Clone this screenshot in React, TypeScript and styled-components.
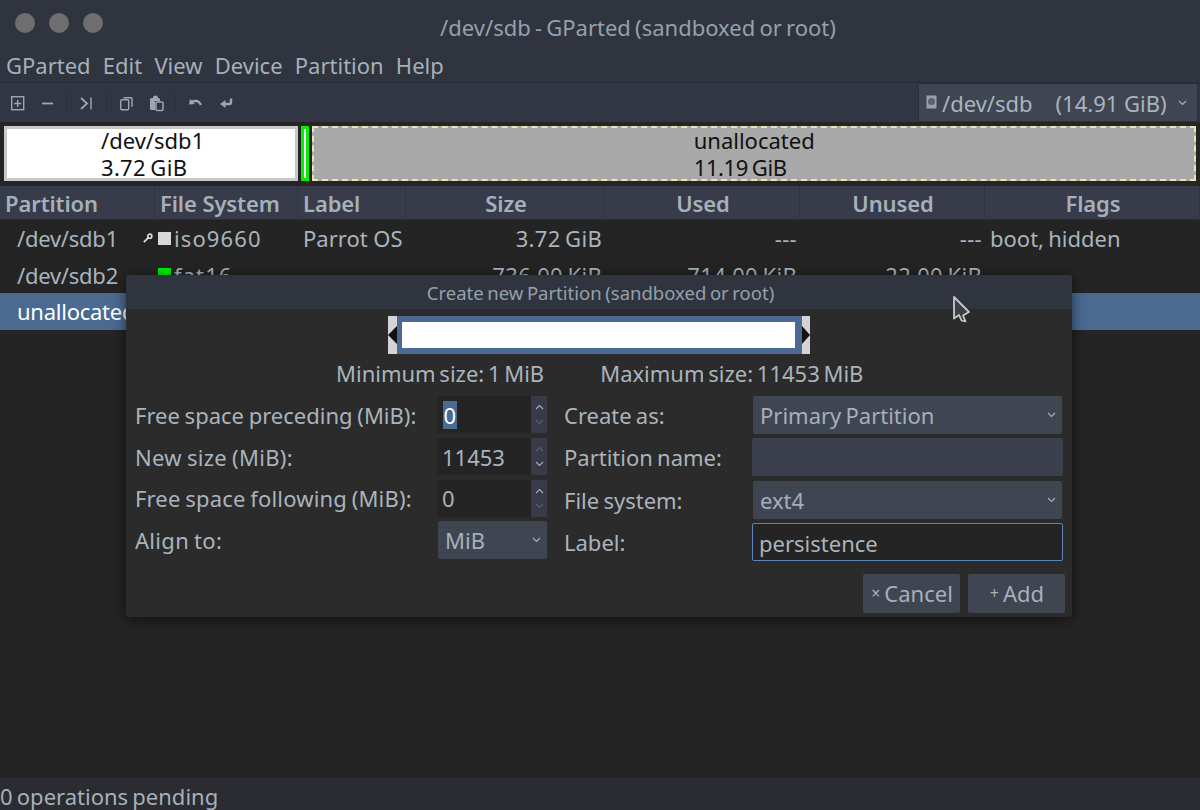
import React from "react";
import styled, { createGlobalStyle } from "styled-components";

const Global = createGlobalStyle`
  html, body { margin: 0; padding: 0; background: #232323; }
  body { font-family: "Noto Sans", "Open Sans", sans-serif; font-size: 22px; color: #a9b4bd; word-spacing: -1.5px; }
  * { box-sizing: border-box; }
`;

const Win = styled.div`
  position: relative; width: 1200px; height: 810px; overflow: hidden;
  display: flex; flex-direction: column; background: #242424;
`;
const TitleBar = styled.div`
  height: 42px; flex: none; background: #2f343f; display: flex; align-items: center; position: relative;
  justify-content: center; color: #96a0ab; padding-left: 76px; padding-top: 11px;
`;
const Lights = styled.div`
  position: absolute; left: 15px; top: 13px; display: flex; gap: 14px;
`;
const Light = styled.span`
  width: 20px; height: 20px; border-radius: 50%; background: #6e6e6e;
`;
const MenuBar = styled.div`
  height: 41px; flex: none; background: #2f343f; display: flex; gap: 12.2px; align-items: center; padding: 6px 0 0 6px;
  color: #a5b0ba; border-bottom: 1px solid #262a33;
`;
const ToolBar = styled.div`
  height: 39px; flex: none; background: #323644; display: flex; align-items: center; padding-left: 9px; position: relative;
`;
const Tool = styled.span<{ $mr: number }>`
  width: 18px; height: 18px; display: flex; margin-right: ${(p) => p.$mr}px; flex: none;
`;
const Sep = styled.span<{ $mr: number }>`
  width: 1px; height: 22px; margin-right: ${(p) => p.$mr}px; flex: none;
  background: repeating-linear-gradient(to bottom, #282b35 0 1px, transparent 1px 2px);
`;
const DeviceCombo = styled.div`
  position: absolute; right: 2px; top: 0; width: 280px; height: 39px; background: #404552; border-radius: 2px;
  display: flex; align-items: center; padding-left: 7px; color: #a9b4bd; white-space: pre; word-spacing: 0;
  border: 1px solid #2b2f39;
`;
const Caret = styled.svg`
  width: 9px; height: 6px; flex: none;
`;
const MapStrip = styled.div`
  height: 64px; flex: none; background: #252525; display: flex; padding: 4px; gap: 3px;
`;
const MapLine = styled.span<{ $ls?: number }>`
  display: block; height: 27px; flex: none; letter-spacing: ${(p) => p.$ls ?? 0}px;
`;
const MapUsed = styled.div`
  width: 294px; height: 55px; background: #fff; border: 3px solid #c8c8c8; color: #111;
  display: flex; flex-direction: column; padding-left: 94px; line-height: 23px;
`;
const MapGreen = styled.div`
  width: 8px; height: 55px; background: #fff; border: 3px solid #00f000; flex: none;
`;
const MapFree = styled.div`
  width: 885px; height: 55px; background: #a9a9a9; border: 2px dashed #e8e6b4; color: #111;
  display: flex; flex-direction: column; line-height: 25px; padding-left: 380px;
`;
const cols = "155px 143px 108px 199px 195px 185px 215px";
const Header = styled.div`
  height: 34px; flex: none; display: grid; grid-template-columns: ${cols}; background: #383c4a;
  border-bottom: 1px solid #2a2d36; font-weight: 600; color: #a5b0ba; word-spacing: 0; letter-spacing: -0.1px;
`;
const HeadCell = styled.div<{ $c?: boolean }>`
  display: flex; align-items: center; padding-left: 5px; padding-right: ${(p) => (p.$c ? "3px" : "0")};
  border-right: 1px solid #2f343f;
  justify-content: ${(p) => (p.$c ? "center" : "flex-start")};
`;
const Row = styled.div<{ $sel?: boolean }>`
  height: 36.5px; flex: none; display: grid; grid-template-columns: ${cols}; align-items: center;
  background: ${(p) => (p.$sel ? "#4a6a92" : "transparent")};
  color: ${(p) => (p.$sel ? "#fff" : "#a9b4bd")};
`;
const NameCell = styled.div`padding-left: 17px; white-space: nowrap; letter-spacing: -0.25px;`;
const FsCell = styled.div`display: flex; align-items: center; white-space: nowrap; padding-left: 3px; letter-spacing: 1.1px;`;
const Swatch = styled.span<{ $c: string }>`
  width: 13px; height: 13px; background: ${(p) => p.$c}; margin: 0 3px 0 0; flex: none;
`;
const KeySlot = styled.span`width: 16px; display: flex; margin-left: -16px; flex: none;`;
const LabelCell = styled.div`padding-left: 5px; white-space: nowrap; word-spacing: 0;`;
const RightCell = styled.div`text-align: right; padding-right: 3px; white-space: nowrap; letter-spacing: 0.3px;`;
const FlagsCell = styled.div`padding-left: 5px; white-space: nowrap;`;
const Body = styled.div`flex: 1; background: #242424;`;
const Status = styled.div`
  height: 32.500px; flex: none; background: #2a2c31; display: flex; align-items: center; color: #a5b0ba; padding-top: 4px;
`;

const Dialog = styled.div`
  position: absolute; left: 126px; top: 275px; width: 946px; height: 342px; background: #2b2b2b;
  border-radius: 3px; box-shadow: 0 2px 14px rgba(0,0,0,.55); display: flex; flex-direction: column;
`;
const DTitle = styled.div`
  height: 34px; background: #2f343f; color: #96a0ab; font-size: 18.5px; word-spacing: -1.2px; display: flex; align-items: center; justify-content: center;
  border-radius: 3px 3px 0 0; padding-left: 3px; flex: none;
`;
const Resizer = styled.div`
  margin: 7px 0 0 262px; width: 422px; height: 38px; display: flex; flex: none;
`;
const Handle = styled.div<{ $w: number }>`
  width: ${(p) => p.$w}px; height: 38px; background: #d4d4d4; flex: none; display: flex; align-items: center;
`;
const Bar = styled.div`
  flex: 1; background: #4a6a92; padding: 6px 7px 6px 5px; display: flex;
`;
const BarFill = styled.div`flex: 1; background: #fff;`;
const SizeLine = styled.div`
  display: flex; height: 30px; margin-top: 4px; padding-left: 210px; gap: 56px; align-items: center; white-space: nowrap; word-spacing: -2px;
`;
const Form = styled.div`
  margin: 6px 0 0 9px; display: flex; gap: 16px; flex: none;
`;
const LeftGrid = styled.div`
  display: grid; grid-template-columns: 302px 110px; grid-auto-rows: 41.7px; align-items: center;
`;
const RightGrid = styled.div`
  display: grid; grid-template-columns: 190px 309px; grid-auto-rows: 42.3px; align-items: center;
`;
const FLabel = styled.div<{ $ls?: number }>`white-space: nowrap; word-spacing: -1px; letter-spacing: ${(p) => p.$ls ?? 0}px;`;
const FLabel2 = styled.div`white-space: nowrap; padding-left: 1px;`;
const Spin = styled.div`
  width: 110px; height: 37px; background: #242424; display: flex; justify-content: space-between; border-radius: 2px;
`;
const SpinText = styled.div`padding-left: 5px; display: flex; align-items: center;`;
const Selected = styled.span`background: #4a6a92; color: #fff; height: 28px; line-height: 28px; padding: 0 .5px; margin-left: 1px;`;
const SpinBtns = styled.div`
  width: 16px; height: 37px; background: #373b47; display: flex; flex-direction: column; align-items: center; justify-content: space-between; padding: 8px 0;
`;
const Combo = styled.div<{ $w: number; $pl: number }>`
  width: ${(p) => p.$w}px; height: 38px; background: #404552; border-radius: 2px; display: flex; align-items: center;
  justify-content: space-between; padding: 0 6px 0 ${(p) => p.$pl}px; color: #a5b0ba; justify-self: end;
`;
const Entry = styled.div<{ $focus?: boolean }>`
  width: 311px; height: 38px; margin-left: -1px; border-radius: 2px; display: flex; align-items: center; padding: 2px 0 0 6px;
  background: ${(p) => (p.$focus ? "#242424" : "#3c404c")};
  border: 1px solid ${(p) => (p.$focus ? "#5c86b8" : "#3c404c")};
`;
const Actions = styled.div`
  display: flex; justify-content: flex-end; gap: 8px; padding-right: 7px; margin-top: 11px; flex: none;
`;
const Btn = styled.div`
  width: 97px; height: 39px; background: #404552; border-radius: 2px; display: flex; align-items: center; justify-content: center;
  gap: 4px; color: #a5b0ba; padding: 0 0 1px 1px;
`;
const BtnGlyph = styled.span`font-size: 16px; color: #a5b0ba;`;
const DeviceIcon = styled.svg`flex: none; margin-right: 4px;`;
const DeviceName = styled.span`flex: 1;`;
const CaretSlot = styled.span`display: flex; margin-right: 10px;`;
const Cursor = styled.svg`position: absolute; left: 950px; top: 294px; width: 24px; height: 32px;`;

const ic = { fill: "none", stroke: "#a0a6b0", strokeWidth: 1.4 } as const;

const Down = () => (
  <Caret viewBox="0 0 9 6"><path d="M1 1l3.5 3.5L8 1" fill="none" stroke="#a5b0ba" strokeWidth="1.2" /></Caret>
);
const SUp = ({ dim }: { dim?: boolean }) => (
  <Caret viewBox="0 0 9 6"><path d="M1 5l3.5-3.5L8 5" fill="none" stroke={dim ? "#5b6070" : "#a5b0ba"} strokeWidth="1.1" /></Caret>
);
const SDown = ({ dim }: { dim?: boolean }) => (
  <Caret viewBox="0 0 9 6"><path d="M1 1l3.5 3.5L8 1" fill="none" stroke={dim ? "#5b6070" : "#a5b0ba"} strokeWidth="1.1" /></Caret>
);

export default function App() {
  return (
    <Win>
      <Global />
      <TitleBar>
        <Lights><Light /><Light /><Light /></Lights>
        <span>/dev/sdb - GParted (sandboxed or root)</span>
      </TitleBar>
      <MenuBar>
        <span>GParted</span><span>Edit</span><span>View</span><span>Device</span><span>Partition</span><span>Help</span>
      </MenuBar>
      <ToolBar>
        <Tool $mr={12}><svg viewBox="0 0 18 18" width="18" height="18"><rect x="2.700" y="2.700" width="12" height="13" {...ic} /><path d="M8.700 6v7M5.200 9.500h7" {...ic} /></svg></Tool>
        <Tool $mr={9}><svg viewBox="0 0 18 18" width="18" height="18"><path d="M3 9.500h11" fill="none" stroke="#a0a6b0" strokeWidth="1.800" /></svg></Tool>
        <Sep $mr={11} />
        <Tool $mr={10}><svg viewBox="0 0 18 18" width="18" height="18"><path d="M3 4l6 5.500L3 15" fill="none" stroke="#a0a6b0" strokeWidth="1.800" /><path d="M13 3.500v12" {...ic} /></svg></Tool>
        <Sep $mr={10} />
        <Tool $mr={12}><svg viewBox="0 0 18 18" width="18" height="18"><rect x="3.700" y="5.700" width="8" height="10" rx="1" {...ic} /><path d="M6.500 3.700h7.500a1 1 0 0 1 1 1v8" {...ic} /></svg></Tool>
        <Tool $mr={10}><svg viewBox="0 0 18 18" width="18" height="18"><path d="M3 5.500a1.500 1.500 0 0 1 1.500-1.500H6a2.500 2.500 0 0 1 5 0h.5A1.500 1.500 0 0 1 13 5.500V7H8v9H4.500A1.500 1.500 0 0 1 3 14.500z" fill="#a0a6b0" /><rect x="9" y="8" width="7" height="8.500" rx="1" fill="none" stroke="#a0a6b0" strokeWidth="1.500" /></svg></Tool>
        <Sep $mr={11} />
        <Tool $mr={12}><svg viewBox="0 0 18 18" width="18" height="18"><path d="M2 10.500L3 5l1.800 1.500C6.200 5.700 7.800 5.500 9.500 5.800c2.500.5 4.200 2 5.500 4.700l-2 1c-1-1.900-2.300-2.900-4-3.200-1-.2-1.900-.1-2.700.300L8 10z" fill="#a0a6b0" /></svg></Tool>
        <Tool $mr={0}><svg viewBox="0 0 18 18" width="18" height="18"><path d="M14 4.500v4a1.500 1.500 0 0 1-1.500 1.500H7.500" fill="none" stroke="#a0a6b0" strokeWidth="2.400" /><path d="M8.500 6L3 10l5.500 4z" fill="#a0a6b0" /></svg></Tool>
        <DeviceCombo>
          <DeviceIcon viewBox="0 0 12 16" width="12" height="16"><rect x="0.500" y="0.500" width="10" height="13" fill="#9aa0a6" /><circle cx="5.500" cy="6.500" r="3.500" fill="#5c6270" /></DeviceIcon>
          <DeviceName>/dev/sdb    (14.91 GiB)</DeviceName>
          <CaretSlot><Down /></CaretSlot>
        </DeviceCombo>
      </ToolBar>
      <MapStrip>
        <MapUsed><MapLine>/dev/sdb1</MapLine><MapLine $ls={0.3}>3.72 GiB</MapLine></MapUsed>
        <MapGreen />
        <MapFree><MapLine>unallocated</MapLine><MapLine $ls={-0.4}>11.19 GiB</MapLine></MapFree>
      </MapStrip>
      <Header>
        <HeadCell>Partition</HeadCell>
        <HeadCell>File System</HeadCell>
        <HeadCell>Label</HeadCell>
        <HeadCell $c>Size</HeadCell>
        <HeadCell $c>Used</HeadCell>
        <HeadCell $c>Unused</HeadCell>
        <HeadCell $c>Flags</HeadCell>
      </Header>
      <Row>
        <NameCell>/dev/sdb1</NameCell>
        <FsCell>
          <KeySlot><svg viewBox="0 0 12 12" width="11" height="11"><circle cx="8.500" cy="3.500" r="2.200" fill="none" stroke="#ddd" strokeWidth="1.800" /><path d="M7 5L2 10" stroke="#ddd" strokeWidth="2" /></svg></KeySlot>
          <Swatch $c="#d8d8d8" />iso9660
        </FsCell>
        <LabelCell>Parrot OS</LabelCell>
        <RightCell>3.72 GiB</RightCell>
        <RightCell>---</RightCell>
        <RightCell>---</RightCell>
        <FlagsCell>boot, hidden</FlagsCell>
      </Row>
      <Row>
        <NameCell>/dev/sdb2</NameCell>
        <FsCell><Swatch $c="#00f000" />fat16</FsCell>
        <LabelCell />
        <RightCell>736.00 KiB</RightCell>
        <RightCell>714.00 KiB</RightCell>
        <RightCell>22.00 KiB</RightCell>
        <FlagsCell />
      </Row>
      <Row $sel>
        <NameCell>unallocated</NameCell>
      </Row>
      <Body />
      <Status>0 operations pending</Status>

      <Dialog>
        <DTitle>Create new Partition (sandboxed or root)</DTitle>
        <Resizer>
          <Handle $w={9}><svg viewBox="0 0 9 18" width="9" height="18"><path d="M0 9L9 0v18z" fill="#111" /></svg></Handle>
          <Bar><BarFill /></Bar>
          <Handle $w={8}><svg viewBox="0 0 8 18" width="8" height="18"><path d="M8 9L0 0v18z" fill="#111" /></svg></Handle>
        </Resizer>
        <SizeLine><span>Minimum size: 1 MiB</span><span>Maximum size: 11453 MiB</span></SizeLine>
        <Form>
          <LeftGrid>
            <FLabel>Free space preceding (MiB):</FLabel>
            <Spin><SpinText><Selected>0</Selected></SpinText><SpinBtns><SUp /><SDown dim /></SpinBtns></Spin>
            <FLabel $ls={0.3}>New size (MiB):</FLabel>
            <Spin><SpinText>11453</SpinText><SpinBtns><SUp dim /><SDown /></SpinBtns></Spin>
            <FLabel $ls={0.15}>Free space following (MiB):</FLabel>
            <Spin><SpinText>0</SpinText><SpinBtns><SUp /><SDown dim /></SpinBtns></Spin>
            <FLabel $ls={0.3}>Align to:</FLabel>
            <Combo $w={109} $pl={7}><span>MiB</span><Down /></Combo>
          </LeftGrid>
          <RightGrid>
            <FLabel2>Create as:</FLabel2>
            <Combo $w={309} $pl={7}><span>Primary Partition</span><Down /></Combo>
            <FLabel2>Partition name:</FLabel2>
            <Entry />
            <FLabel2>File system:</FLabel2>
            <Combo $w={309} $pl={7}><span>ext4</span><Down /></Combo>
            <FLabel2>Label:</FLabel2>
            <Entry $focus>persistence</Entry>
          </RightGrid>
        </Form>
        <Actions>
          <Btn><BtnGlyph>×</BtnGlyph>Cancel</Btn>
          <Btn><BtnGlyph>+</BtnGlyph>Add</Btn>
        </Actions>
      </Dialog>
      <Cursor viewBox="0 0 24 32"><path d="M4 3l15 15-6 3.500 2.500 6-4-1-2.500-5.500-5 3.500z" fill="#3d3f4a" stroke="#c8c8c8" strokeWidth="1.800" strokeLinejoin="round" /></Cursor>
    </Win>
  );
}
